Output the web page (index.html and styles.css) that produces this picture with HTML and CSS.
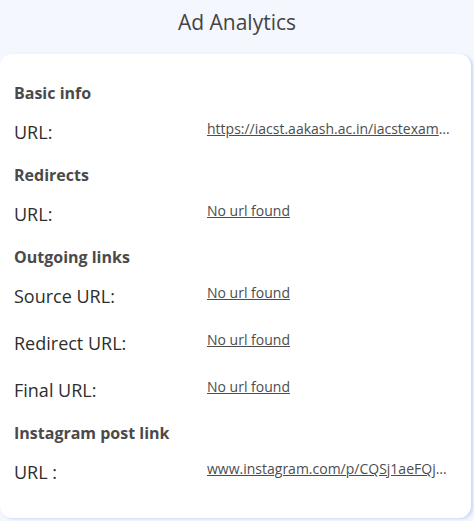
FILE: index.html
```html
<!DOCTYPE html>
<html>
<head>
<meta charset="utf-8">
<link rel="stylesheet" href="styles.css">
</head>
<body>
<div class="page">
  <h1 class="title">Ad Analytics</h1>
  <div class="card">
    <section class="section">
      <h2 class="heading">Basic info</h2>
      <div class="rows">
        <div class="row"><span class="label">URL:</span><a class="value" href="#">https://iacst.aakash.ac.in/iacstexam?utm_source=instagram&amp;utm_medium=paid</a></div>
      </div>
    </section>
    <section class="section">
      <h2 class="heading">Redirects</h2>
      <div class="rows">
        <div class="row"><span class="label">URL:</span><a class="value" href="#">No url found</a></div>
      </div>
    </section>
    <section class="section">
      <h2 class="heading">Outgoing links</h2>
      <div class="rows">
        <div class="row"><span class="label">Source URL:</span><a class="value" href="#">No url found</a></div>
        <div class="row"><span class="label">Redirect URL:</span><a class="value" href="#">No url found</a></div>
        <div class="row"><span class="label">Final URL:</span><a class="value" href="#">No url found</a></div>
      </div>
    </section>
    <section class="section">
      <h2 class="heading">Instagram post link</h2>
      <div class="rows">
        <div class="row"><span class="label">URL :</span><a class="value" href="#">www.instagram.com/p/CQSj1aeFQjX/?utm_source=ig_web_copy_link</a></div>
      </div>
    </section>
  </div>
</div>
</body>
</html>
```
FILE: styles.css
```css
* { box-sizing: border-box; }
html, body {
  margin: 0;
  padding: 0;
  background: #f4f7fe;
  font-family: "Open Sans", "Noto Sans", sans-serif;
}
.page {
  width: 474px;
  height: 521px;
  overflow: hidden;
}
.title {
  margin: 0;
  height: 54px;
  padding-top: 8px;
  text-align: center;
  font-size: 21px;
  line-height: 28px;
  font-weight: 500;
  color: #444444;
}
.card {
  width: 471px;
  background: #ffffff;
  border-radius: 12px;
  box-shadow: 2px 1px 3px rgba(150, 175, 240, 0.45);
  padding: 28px 19px 32px 14px;
  display: flex;
  flex-direction: column;
  gap: 18px;
}
.section {
  display: flex;
  flex-direction: column;
  gap: 14px;
}
.heading {
  margin: 0;
  font-size: 16px;
  line-height: 22px;
  font-weight: 700;
  color: #4a4a4a;
}
.rows {
  display: flex;
  flex-direction: column;
  gap: 19px;
}
.row {
  display: flex;
  align-items: flex-start;
  height: 28px;
}
.label {
  width: 193px;
  flex: none;
  font-size: 18px;
  line-height: 28px;
  color: #2e2e2e;
}
.value {
  flex: 1;
  min-width: 0;
  padding-top: 1px;
  font-size: 14px;
  line-height: 20px;
  color: #4d4d4d;
  text-decoration: underline;
  white-space: nowrap;
  overflow: hidden;
  text-overflow: ellipsis;
}
```
